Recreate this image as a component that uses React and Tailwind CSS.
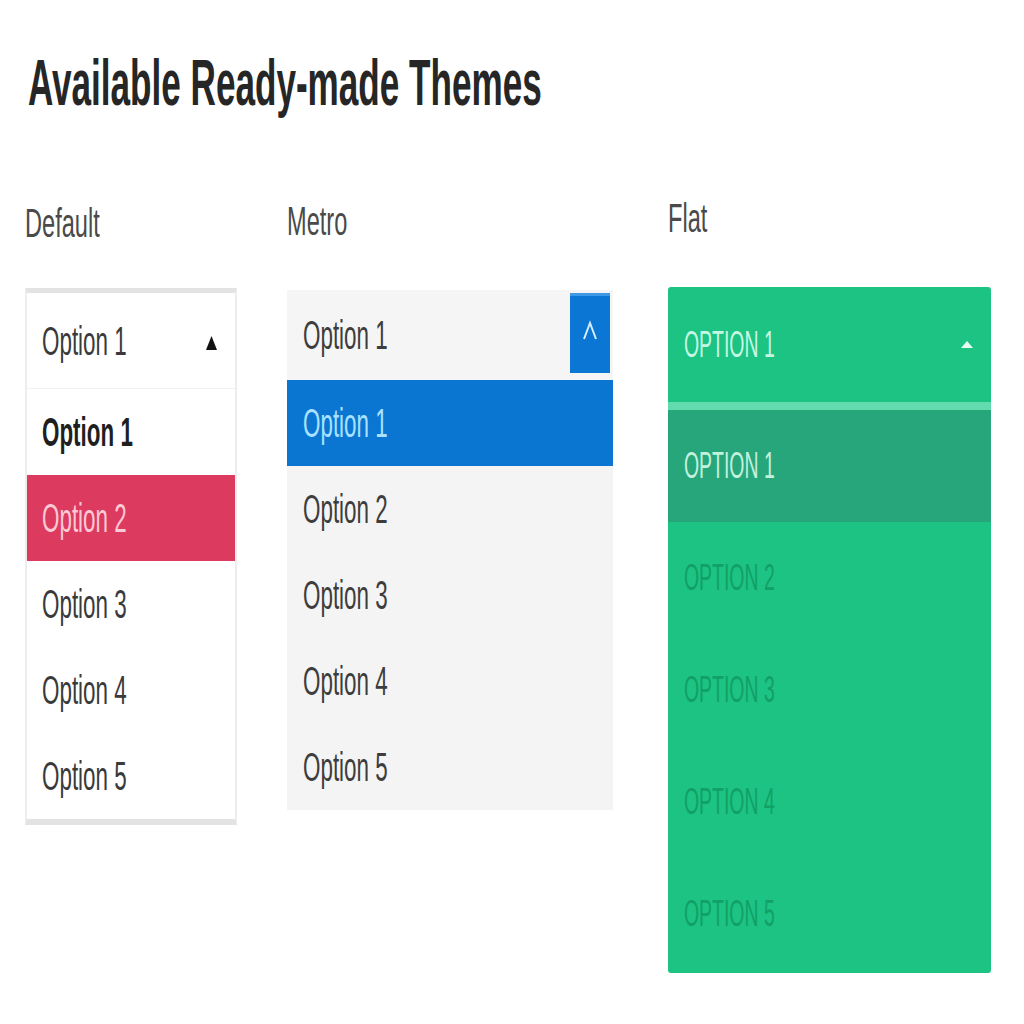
import React from "react";

const Squish = ({ children, className = "" }) => (
  <span className={`inline-block origin-left whitespace-nowrap leading-none ${className}`}>{children}</span>
);

function DefaultTheme() {
  const rows = ["Option 1", "Option 2", "Option 3", "Option 4", "Option 5"];
  return (
    <div className="w-[212px] bg-white border-x-2 border-x-[#ededed] border-t-[5px] border-t-[#e3e3e3] border-b-[6px] border-b-[#e3e3e3]">
      <div className="h-[96px] flex items-center justify-between pl-[15px] pr-[18px] border-b border-[#f2f2f2]">
        <Squish className="text-[40px] text-[#3a3a3a] scale-x-[0.56]">Option 1</Squish>
        <svg width="11" height="14" viewBox="0 0 11 14" className="mt-[4px]">
          <polygon points="5.5,0 11,14 0,14" fill="#111" />
        </svg>
      </div>
      {rows.map((r, i) => (
        <div
          key={r}
          className={`h-[86px] flex items-center pl-[15px] ${i === 1 ? "bg-[#dd3a5f]" : ""}`}
        >
          <Squish
            className={`text-[40px] scale-x-[0.56] ${
              i === 0 ? "font-bold text-[#1f1f1f]" : i === 1 ? "text-[#f9c9d4]" : "text-[#3a3a3a]"
            }`}
          >
            {r}
          </Squish>
        </div>
      ))}
    </div>
  );
}

function MetroTheme() {
  const rows = ["Option 1", "Option 2", "Option 3", "Option 4", "Option 5"];
  return (
    <div className="w-[326px] bg-[#f4f4f4]">
      <div className="h-[90px] flex justify-between bg-[#f5f5f5]">
        <div className="flex items-center pl-[16px]">
          <Squish className="text-[40px] text-[#3d3d3d] scale-x-[0.56]">Option 1</Squish>
        </div>
        <div className="mt-[3px] mr-[3px] w-[40px] h-[80px] bg-[#0b76d4] border-t-[3px] border-[#3d98e6] flex items-center justify-center">
          <svg width="16" height="24" viewBox="0 0 16 24" className="-mt-[8px]">
            <polyline points="2,20 8,4 14,20" fill="none" stroke="#d8eeff" strokeWidth="2" />
          </svg>
        </div>
      </div>
      {rows.map((r, i) => (
        <div
          key={r}
          className={`h-[86px] flex items-center pl-[16px] ${i === 0 ? "bg-[#0b75d2]" : ""}`}
        >
          <Squish className={`text-[40px] scale-x-[0.56] ${i === 0 ? "text-[#a8e2ff]" : "text-[#3d3d3d]"}`}>
            {r}
          </Squish>
        </div>
      ))}
    </div>
  );
}

function FlatTheme() {
  const rows = ["OPTION 1", "OPTION 2", "OPTION 3", "OPTION 4", "OPTION 5"];
  return (
    <div className="w-[323px] bg-[#1cc383] rounded-[3px] pb-[3px]">
      <div className="h-[115px] flex items-center justify-between pl-[16px] pr-[18px]">
        <Squish className="text-[36px] text-[#c6f7e2] scale-x-[0.54]">OPTION 1</Squish>
        <svg width="12" height="7" viewBox="0 0 12 7">
          <polygon points="6,0 12,7 0,7" fill="#e6fff5" />
        </svg>
      </div>
      <div className="h-[8px] bg-[#62dcae]" />
      {rows.map((r, i) => (
        <div
          key={r}
          className={`h-[112px] flex items-center pl-[16px] ${i === 0 ? "bg-[#28a67b]" : ""}`}
        >
          <Squish className={`text-[36px] scale-x-[0.54] ${i === 0 ? "text-[#c3f1dd]" : "text-[#12a066]"}`}>
            {r}
          </Squish>
        </div>
      ))}
    </div>
  );
}

export default function App() {
  return (
    <div className="w-[1024px] h-[1024px] bg-white font-['Liberation_Sans',Arial,sans-serif] pl-[25px] pt-[50px] overflow-hidden">
      <h1 className="ml-[3px] h-[65px]">
        <Squish className="text-[65px] font-bold text-[#262626] scale-x-[0.54]">Available Ready-made Themes</Squish>
      </h1>

      <div className="flex items-start mt-[85px]">
        <div className="flex flex-col">
          <div className="h-[40px] mt-[3px]">
            <Squish className="text-[40px] text-[#4a4a4a] scale-x-[0.59]">Default</Squish>
          </div>
          <div className="mt-[45px]">
            <DefaultTheme />
          </div>
        </div>

        <div className="flex flex-col ml-[50px]">
          <div className="h-[40px] mt-[1px]">
            <Squish className="text-[40px] text-[#4a4a4a] scale-x-[0.59]">Metro</Squish>
          </div>
          <div className="mt-[49px]">
            <MetroTheme />
          </div>
        </div>

        <div className="flex flex-col ml-[55px]">
          <div className="h-[40px] -mt-[2px]">
            <Squish className="text-[40px] text-[#4a4a4a] scale-x-[0.59]">Flat</Squish>
          </div>
          <div className="mt-[49px]">
            <FlatTheme />
          </div>
        </div>
      </div>
    </div>
  );
}
